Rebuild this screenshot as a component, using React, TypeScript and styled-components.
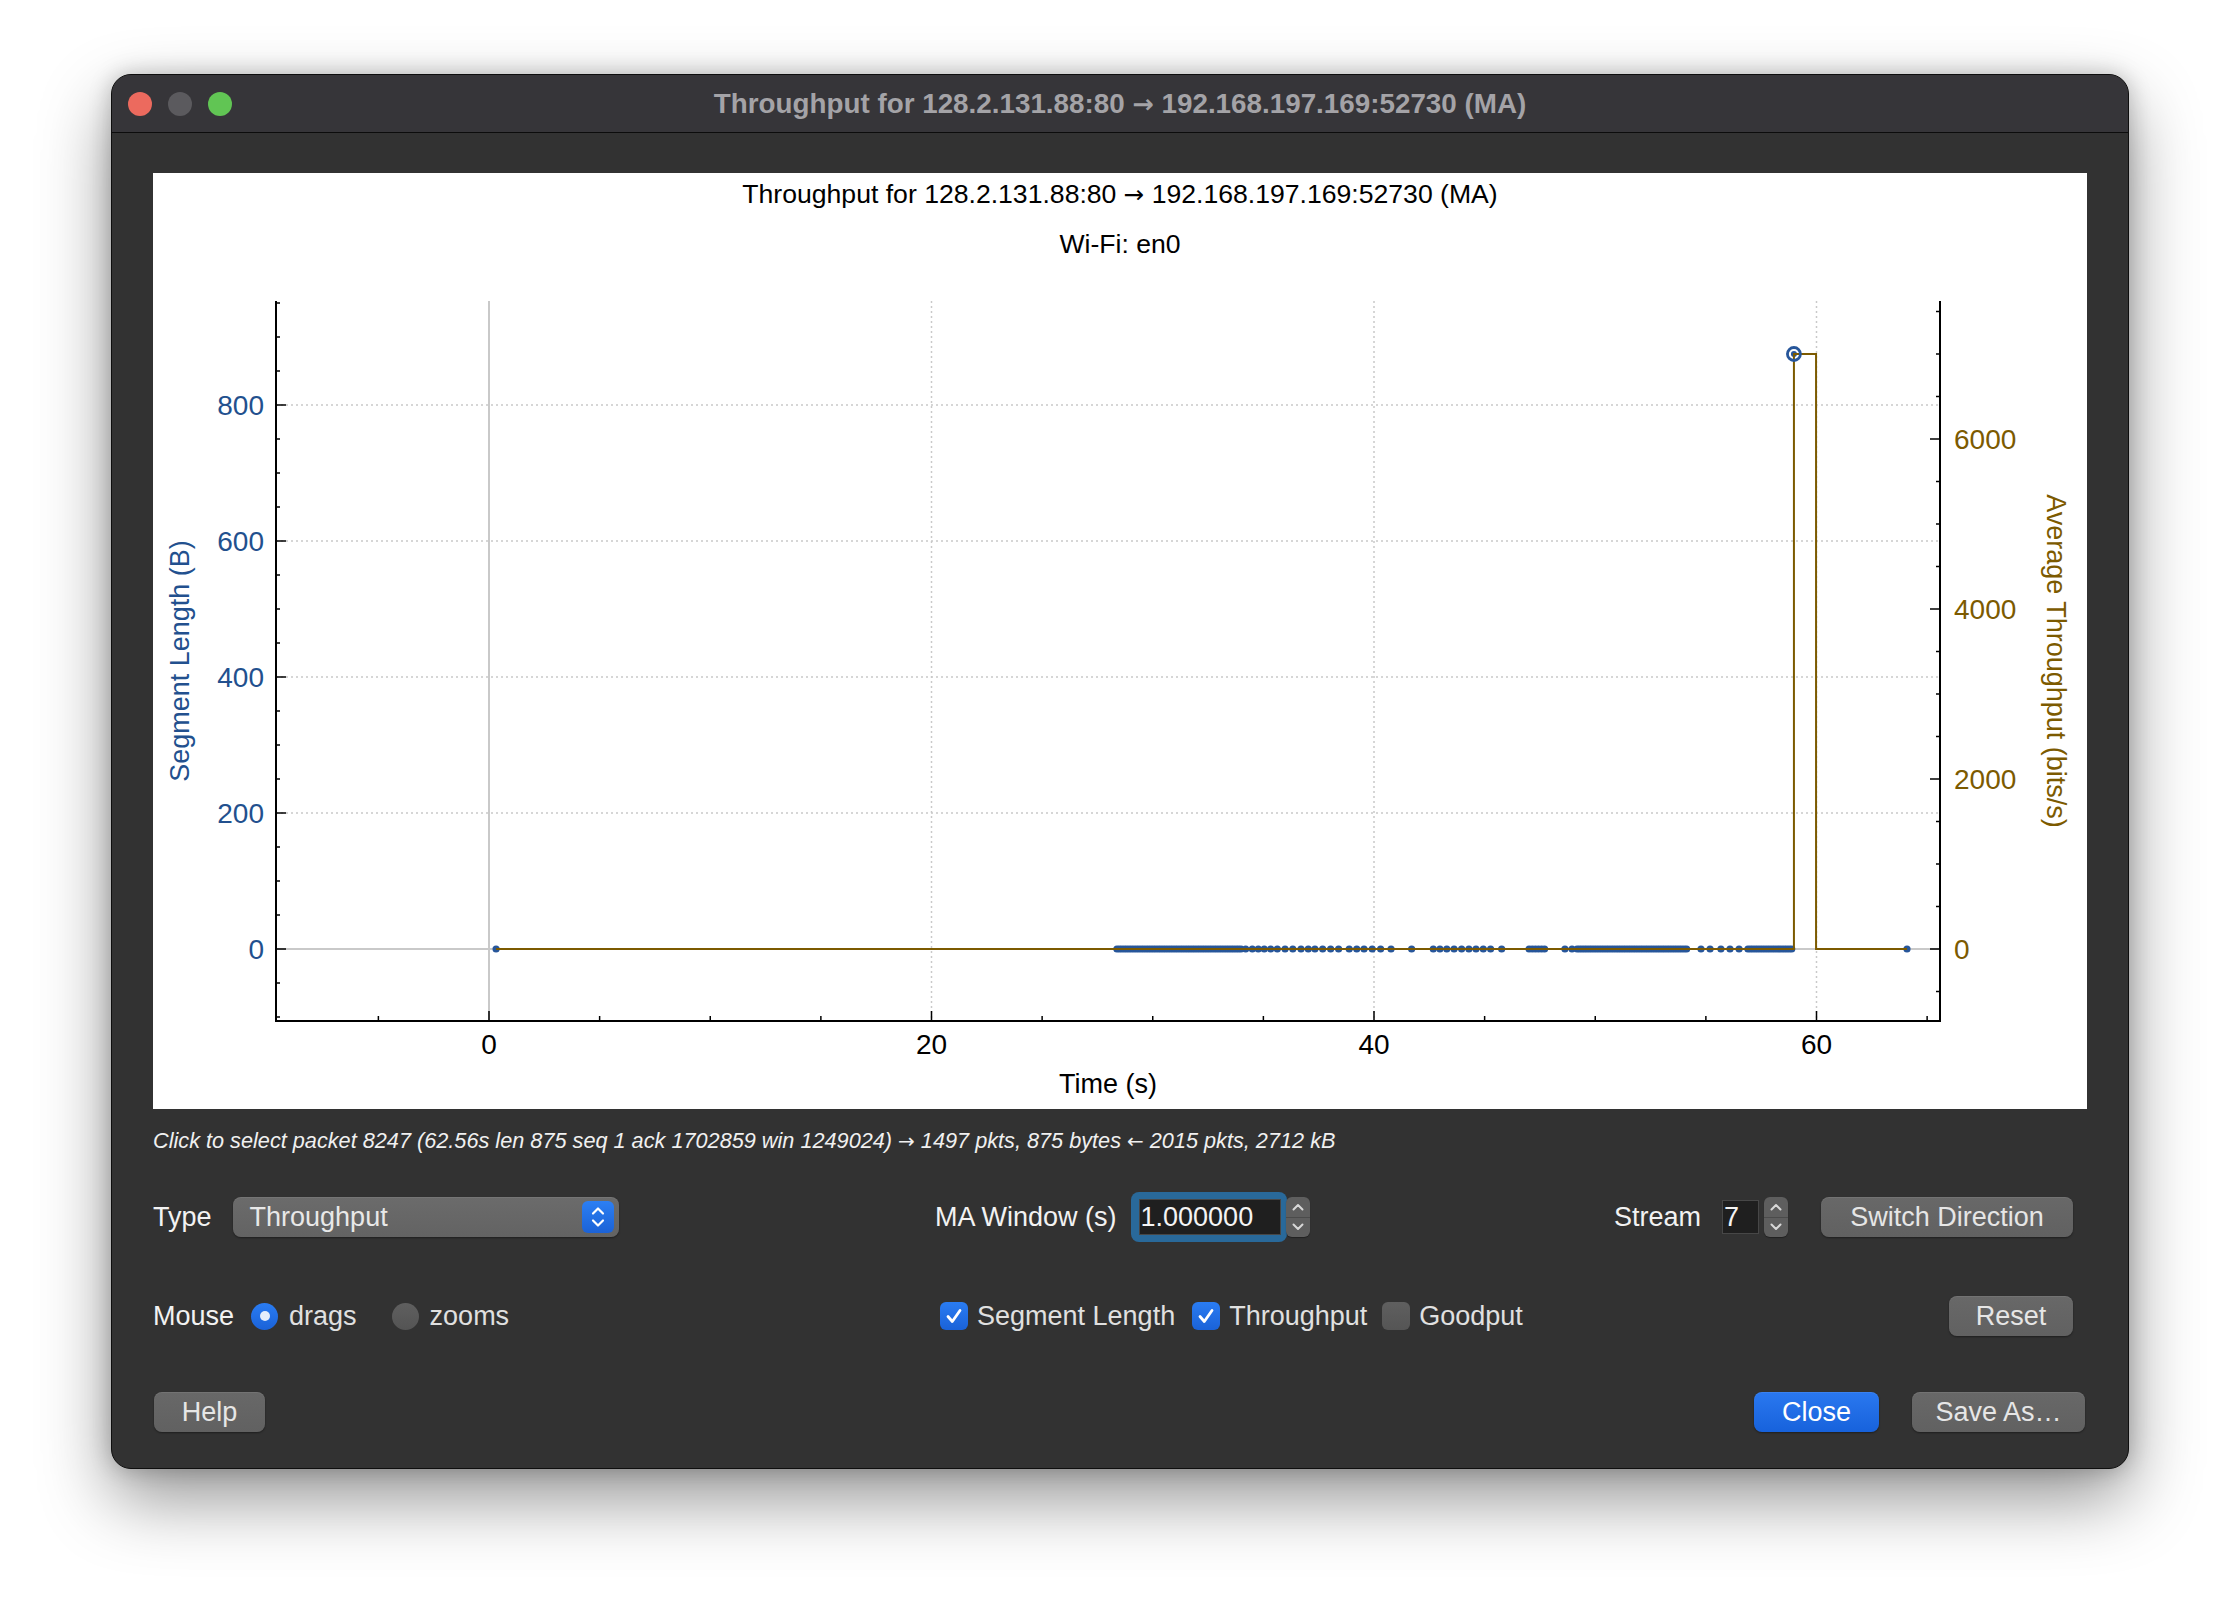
import React from 'react';
import styled, { createGlobalStyle } from 'styled-components';

const GlobalStyle = createGlobalStyle`
  html, body {
    margin: 0;
    padding: 0;
    background: #ffffff;
  }
  body {
    font-family: "Liberation Sans", Arial, sans-serif;
  }
`;

const Page = styled.div`
  width: 2240px;
  height: 1618px;
  box-sizing: border-box;
  padding: 74px 0 0 111px;
`;

const Window = styled.div`
  width: 2018px;
  height: 1395px;
  box-sizing: border-box;
  display: flex;
  flex-direction: column;
  background: #323232;
  border: 1px solid #0e0e0e;
  border-radius: 20px;
  overflow: hidden;
  box-shadow: 0 30px 70px rgba(0, 0, 0, 0.42), 0 0 22px rgba(0, 0, 0, 0.22);
`;

const TitleBar = styled.div`
  height: 58px;
  flex-shrink: 0;
  box-sizing: border-box;
  display: grid;
  grid-template-columns: 1fr auto 1fr;
  align-items: center;
  padding: 0 16px;
  background: #363539;
  border-bottom: 1px solid #0c0c0c;
`;

const Lights = styled.div`
  display: flex;
  gap: 16px;
`;

const Light = styled.span<{ $color: string }>`
  width: 24px;
  height: 24px;
  border-radius: 50%;
  background: ${p => p.$color};
`;

const WindowTitle = styled.div`
  font-size: 27.8px;
  font-weight: bold;
  color: #a4a3a7;
  white-space: nowrap;
`;

// Liberation Sans draws a tiny arrow; DejaVu's is closer to the mac one
const Arrow = styled.span`
  font-family: "DejaVu Sans", sans-serif;
  font-size: 0.92em;
`;

const Body = styled.div`
  flex: 1;
  display: flex;
  flex-direction: column;
  padding: 40px 41px 0;
`;

const PlotPanel = styled.div`
  height: 936px;
  flex-shrink: 0;
  display: flex;
  flex-direction: column;
  background: #ffffff;
`;

const PlotHeader = styled.div`
  height: 90px;
  box-sizing: border-box;
  padding-top: 4px;
  display: flex;
  flex-direction: column;
  align-items: center;
  gap: 15px;
  color: #000000;
  font-size: 26.6px;
`;

const PlotTitleLine = styled.div`
  line-height: 34px;
  white-space: nowrap;
`;

const Status = styled.div`
  margin-top: 18px;
  line-height: 28px;
  font-size: 21.7px;
  font-style: italic;
  color: #f0f0f0;
  white-space: nowrap;
`;

const Controls = styled.div`
  margin-top: 37px;
  display: grid;
  grid-template-columns: 782px 1fr auto;
  grid-template-rows: 50px 40px;
  row-gap: 54px;
  align-items: center;
  padding-right: 14px;
`;

const Group = styled.div<{ $end?: boolean }>`
  display: flex;
  align-items: center;
  justify-content: ${p => (p.$end ? 'flex-end' : 'flex-start')};
`;

const Label = styled.span<{ $mr?: number; $dim?: boolean }>`
  font-size: 27px;
  color: ${p => (p.$dim ? '#e0e0e0' : '#f2f2f2')};
  white-space: nowrap;
  margin-right: ${p => p.$mr ?? 0}px;
`;

const Combo = styled.div`
  width: 386px;
  height: 40px;
  box-sizing: border-box;
  display: flex;
  align-items: center;
  justify-content: space-between;
  padding: 0 5px 0 17px;
  border-radius: 8px;
  background: linear-gradient(#6b6b6b, #636363);
  box-shadow: 0 1px 2px rgba(0, 0, 0, 0.4), inset 0 1px 0 rgba(255, 255, 255, 0.07);
  font-size: 27px;
  color: #e8e8e8;
`;

const ComboArrows = styled.span`
  width: 32px;
  height: 32px;
  border-radius: 6px;
  display: flex;
  align-items: center;
  justify-content: center;
  background: linear-gradient(#2c7ff3, #1b62d6);
`;

const FocusRing = styled.div`
  display: flex;
  padding: 7px 6px 7px 8px;
  border-radius: 8px;
  background: #29699a;
`;

const Field = styled.div<{ $width: number; $height: number }>`
  width: ${p => p.$width}px;
  height: ${p => p.$height}px;
  box-sizing: border-box;
  display: flex;
  align-items: center;
  padding-left: 1px;
  background: #1f1f1f;
  border: 1px solid #474747;
  font-size: 27px;
  color: #f4f4f4;
`;

const Stepper = styled.div<{ $ml: number }>`
  width: 24px;
  height: 40px;
  margin-left: ${p => p.$ml}px;
  box-sizing: border-box;
  display: flex;
  flex-direction: column;
  border-radius: 6px;
  background: #5e5e5e;
  box-shadow: 0 1px 1px rgba(0, 0, 0, 0.35);
`;

const StepHalf = styled.span<{ $top?: boolean }>`
  flex: 1;
  display: flex;
  align-items: center;
  justify-content: center;
  border-bottom: ${p => (p.$top ? '1px solid #4b4b4b' : 'none')};
`;

const Button = styled.button<{ $width: number; $primary?: boolean; $ml?: number }>`
  width: ${p => p.$width}px;
  height: 40px;
  margin-left: ${p => p.$ml ?? 0}px;
  padding: 0;
  border: none;
  border-radius: 8px;
  font-family: "Liberation Sans", Arial, sans-serif;
  font-size: 27px;
  color: ${p => (p.$primary ? '#ffffff' : '#e6e6e6')};
  background: ${p =>
    p.$primary ? 'linear-gradient(#2a78f0, #1762dc)' : 'linear-gradient(#686868, #616161)'};
  box-shadow: 0 1px 2px rgba(0, 0, 0, 0.4), inset 0 1px 0 rgba(255, 255, 255, 0.08);
`;

const Radio = styled.span<{ $on?: boolean; $ml: number }>`
  width: 27px;
  height: 27px;
  margin: 0 11px 0 ${p => p.$ml}px;
  border-radius: 50%;
  display: flex;
  align-items: center;
  justify-content: center;
  background: ${p => (p.$on ? 'linear-gradient(#2a7cf2, #1a62d8)' : 'linear-gradient(#5f5f5f, #545454)')};
  &::after {
    content: '';
    display: ${p => (p.$on ? 'block' : 'none')};
    width: 10px;
    height: 10px;
    border-radius: 50%;
    background: #e4edfb;
  }
`;

const Check = styled.span<{ $on?: boolean; $ml: number }>`
  width: 28px;
  height: 28px;
  margin: 0 9px 0 ${p => p.$ml}px;
  border-radius: 6px;
  display: flex;
  align-items: center;
  justify-content: center;
  background: ${p => (p.$on ? 'linear-gradient(#2a7cf2, #1a62d8)' : 'linear-gradient(#5f5f5f, #555555)')};
`;

const ButtonBar = styled.div`
  margin-top: 56px;
  height: 40px;
  display: flex;
  align-items: center;
  gap: 33px;
  padding: 0 2px 0 1px;
  & > :first-child {
    margin-right: auto;
  }
`;

// ---- chart geometry (svg coords, origin at plot panel left / header bottom) ----
const W = 1934;
const H = 846;
const LEFT = 123;
const RIGHT = 1787;
const TOP = 38;
const BOTTOM = 758;
const Y0 = 686;
const xAt = (t: number) => 336 + t * 22.125;
const yLen = (b: number) => Y0 - b * 0.68;
const yTput = (bps: number) => Y0 - bps * 0.085;

const BLUE = '#27569a';
const BLUE_TEXT = '#22508e';
const OLIVE = '#7c5a00';
const GRID = '#c9c9c9';

const range = (from: number, to: number, step: number) => {
  const out: number[] = [];
  for (let v = from; v <= to + 1e-9; v += step) out.push(+v.toFixed(3));
  return out;
};

const packetTimes = [
  0.32,
  ...range(28.38, 34.08, 0.11),
  34.2, 34.5, 34.77, 35.04, 35.33, 35.63, 35.98, 36.33, 36.7, 37.03, 37.33, 37.68,
  38.04, 38.4, 38.88, 39.22, 39.55, 39.92, 40.3, 40.77, 41.7, 42.68, 42.98, 43.29,
  43.62, 43.96, 44.29, 44.61, 44.94, 45.27, 45.77,
  ...range(47.01, 47.82, 0.14),
  48.63, 48.95,
  ...range(49.18, 54.15, 0.11),
  54.78, 55.19, 55.68, 56.09, 56.5,
  ...range(56.9, 58.9, 0.11),
  64.09,
];

const peakT = 58.98;
const peakLen = 875;

const Chevrons = ({ color }: { color: string }) => (
  <svg width="16" height="26" viewBox="0 0 16 26" fill="none">
    <path d="M3 9.5 L8 4.5 L13 9.5" stroke={color} strokeWidth="2.2" strokeLinecap="round" strokeLinejoin="round" />
    <path d="M3 16.5 L8 21.5 L13 16.5" stroke={color} strokeWidth="2.2" strokeLinecap="round" strokeLinejoin="round" />
  </svg>
);

const Chevron = ({ up }: { up?: boolean }) => (
  <svg width="14" height="12" viewBox="0 0 14 12" fill="none">
    <path
      d={up ? 'M2.5 8.5 L7 4 L11.5 8.5' : 'M2.5 3.5 L7 8 L11.5 3.5'}
      stroke="#d8d8d8"
      strokeWidth="2"
      strokeLinecap="round"
      strokeLinejoin="round"
    />
  </svg>
);

const SpinStepper = ({ ml }: { ml: number }) => (
  <Stepper $ml={ml}>
    <StepHalf $top>
      <Chevron up />
    </StepHalf>
    <StepHalf>
      <Chevron />
    </StepHalf>
  </Stepper>
);

const CheckMark = () => (
  <svg width="20" height="20" viewBox="0 0 20 20" fill="none">
    <path d="M4 10.5 L8.3 15.5 L16 4.5" stroke="#ffffff" strokeWidth="2.8" strokeLinecap="round" strokeLinejoin="round" />
  </svg>
);

const ThroughputChart = () => {
  const lenTicks = [0, 200, 400, 600, 800];
  const lenMinor = range(-100, 950, 50);
  const tputTicks = [0, 2000, 4000, 6000];
  const tputMinor = range(-500, 7500, 500);
  const timeTicks = [0, 20, 40, 60];
  const timeMinor = range(-5, 65, 5);
  const tickStyle = { fontFamily: '"Liberation Sans", Arial, sans-serif', fontSize: 28 };
  const titleStyle = { fontFamily: '"Liberation Sans", Arial, sans-serif', fontSize: 27 };

  const line = `M ${xAt(0.32)} ${Y0} H ${xAt(peakT)} V ${yTput(7000)} H ${xAt(peakT + 1)} V ${Y0} H ${xAt(64.09)}`;

  return (
    <svg width={W} height={H} viewBox={`0 0 ${W} ${H}`} style={{ display: 'block' }}>
      {/* grid */}
      {lenTicks.filter(v => v !== 0).map(v => (
        <line key={`gy${v}`} x1={LEFT} x2={RIGHT} y1={yLen(v)} y2={yLen(v)} stroke={GRID} strokeWidth={1.5} strokeDasharray="2 3" />
      ))}
      {timeTicks.filter(v => v !== 0).map(v => (
        <line key={`gx${v}`} x1={xAt(v)} x2={xAt(v)} y1={TOP} y2={BOTTOM} stroke={GRID} strokeWidth={1.5} strokeDasharray="2 3" />
      ))}
      <line x1={LEFT} x2={RIGHT} y1={Y0} y2={Y0} stroke={GRID} strokeWidth={2} />
      <line x1={xAt(0)} x2={xAt(0)} y1={TOP} y2={BOTTOM} stroke={GRID} strokeWidth={2} />

      {/* segment length points */}
      {packetTimes.map((t, i) => (
        <circle key={i} cx={xAt(t)} cy={Y0} r={3.6} fill={BLUE} />
      ))}
      <circle cx={xAt(peakT)} cy={yLen(peakLen)} r={3} fill={BLUE} />

      {/* average throughput */}
      <path d={line} fill="none" stroke={OLIVE} strokeWidth={2} />

      {/* selected packet tracer */}
      <circle cx={xAt(peakT)} cy={yLen(peakLen)} r={6.5} fill="none" stroke={BLUE} strokeWidth={2.8} />

      {/* axes */}
      <line x1={LEFT} x2={LEFT} y1={TOP} y2={BOTTOM + 1} stroke="#000" strokeWidth={2} />
      <line x1={RIGHT} x2={RIGHT} y1={TOP} y2={BOTTOM + 1} stroke="#000" strokeWidth={2} />
      <line x1={LEFT - 1} x2={RIGHT + 1} y1={BOTTOM} y2={BOTTOM} stroke="#000" strokeWidth={2} />

      {lenMinor.map(v => (
        <line key={`lm${v}`} x1={LEFT} x2={LEFT + (v % 200 === 0 ? 10 : 4)} y1={yLen(v)} y2={yLen(v)} stroke="#000" strokeWidth={1.5} />
      ))}
      {tputMinor.map(v => (
        <line key={`rm${v}`} x1={RIGHT} x2={RIGHT - (v % 2000 === 0 ? 10 : 4)} y1={yTput(v)} y2={yTput(v)} stroke="#000" strokeWidth={1.5} />
      ))}
      {timeMinor.map(v => (
        <line key={`bm${v}`} x1={xAt(v)} x2={xAt(v)} y1={BOTTOM} y2={BOTTOM - (v % 20 === 0 ? 10 : 5)} stroke="#000" strokeWidth={1.5} />
      ))}

      {/* tick labels */}
      {lenTicks.map(v => (
        <text key={`ll${v}`} x={111} y={yLen(v)} dy="0.36em" textAnchor="end" fill={BLUE_TEXT} style={tickStyle}>
          {v}
        </text>
      ))}
      {tputTicks.map(v => (
        <text key={`rl${v}`} x={1801} y={yTput(v)} dy="0.36em" textAnchor="start" fill={OLIVE} style={tickStyle}>
          {v}
        </text>
      ))}
      {timeTicks.map(v => (
        <text key={`bl${v}`} x={xAt(v)} y={791} textAnchor="middle" fill="#000" style={tickStyle}>
          {v}
        </text>
      ))}

      {/* axis titles */}
      <text x={(LEFT + RIGHT) / 2} y={830} textAnchor="middle" fill="#000" style={titleStyle}>
        Time (s)
      </text>
      <text
        transform={`translate(26 ${(TOP + BOTTOM) / 2}) rotate(-90)`}
        dy="0.36em"
        textAnchor="middle"
        fill={BLUE_TEXT}
        style={titleStyle}
      >
        Segment Length (B)
      </text>
      <text
        transform={`translate(1904 ${(TOP + BOTTOM) / 2}) rotate(90)`}
        dy="0.36em"
        textAnchor="middle"
        fill={OLIVE}
        style={titleStyle}
      >
        Average Throughput (bits/s)
      </text>
    </svg>
  );
};

const FlowTitle = () => (
  <>
    Throughput for 128.2.131.88:80 <Arrow>{'\u2192'}</Arrow> 192.168.197.169:52730 (MA)
  </>
);

export default function App() {
  return (
    <Page>
      <GlobalStyle />
      <Window>
        <TitleBar>
          <Lights>
            <Light $color="#ec6a5e" />
            <Light $color="#5b5a5e" />
            <Light $color="#61c554" />
          </Lights>
          <WindowTitle>
            <FlowTitle />
          </WindowTitle>
          <span />
        </TitleBar>

        <Body>
          <PlotPanel>
            <PlotHeader>
              <PlotTitleLine>
                <FlowTitle />
              </PlotTitleLine>
              <PlotTitleLine>Wi-Fi: en0</PlotTitleLine>
            </PlotHeader>
            <ThroughputChart />
          </PlotPanel>

          <Status>
            Click to select packet 8247 (62.56s len 875 seq 1 ack 1702859 win 1249024) <Arrow>{'\u2192'}</Arrow> 1497
            pkts, 875 bytes <Arrow>{'\u2190'}</Arrow> 2015 pkts, 2712 kB
          </Status>

          <Controls>
            <Group>
              <Label $mr={21}>Type</Label>
              <Combo>
                <span>Throughput</span>
                <ComboArrows>
                  <Chevrons color="#ffffff" />
                </ComboArrows>
              </Combo>
            </Group>
            <Group>
              <Label $mr={14}>MA Window (s)</Label>
              <FocusRing>
                <Field $width={142} $height={36}>1.000000</Field>
              </FocusRing>
              <SpinStepper ml={-1} />
            </Group>
            <Group $end>
              <Label $mr={21}>Stream</Label>
              <Field $width={37} $height={34}>7</Field>
              <SpinStepper ml={5} />
              <Button $width={252} $ml={33}>Switch Direction</Button>
            </Group>

            <Group>
              <Label $mr={8}>Mouse</Label>
              <Radio $on $ml={9} />
              <Label $dim>drags</Label>
              <Radio $ml={35} />
              <Label $dim>zooms</Label>
            </Group>
            <Group>
              <Check $on $ml={5}>
                <CheckMark />
              </Check>
              <Label $dim>Segment Length</Label>
              <Check $on $ml={17}>
                <CheckMark />
              </Check>
              <Label $dim>Throughput</Label>
              <Check $ml={15} />
              <Label $dim>Goodput</Label>
            </Group>
            <Group $end>
              <Button $width={124}>Reset</Button>
            </Group>
          </Controls>

          <ButtonBar>
            <Button $width={111}>Help</Button>
            <Button $width={125} $primary>Close</Button>
            <Button $width={173}>Save As{'\u2026'}</Button>
          </ButtonBar>
        </Body>
      </Window>
    </Page>
  );
}
